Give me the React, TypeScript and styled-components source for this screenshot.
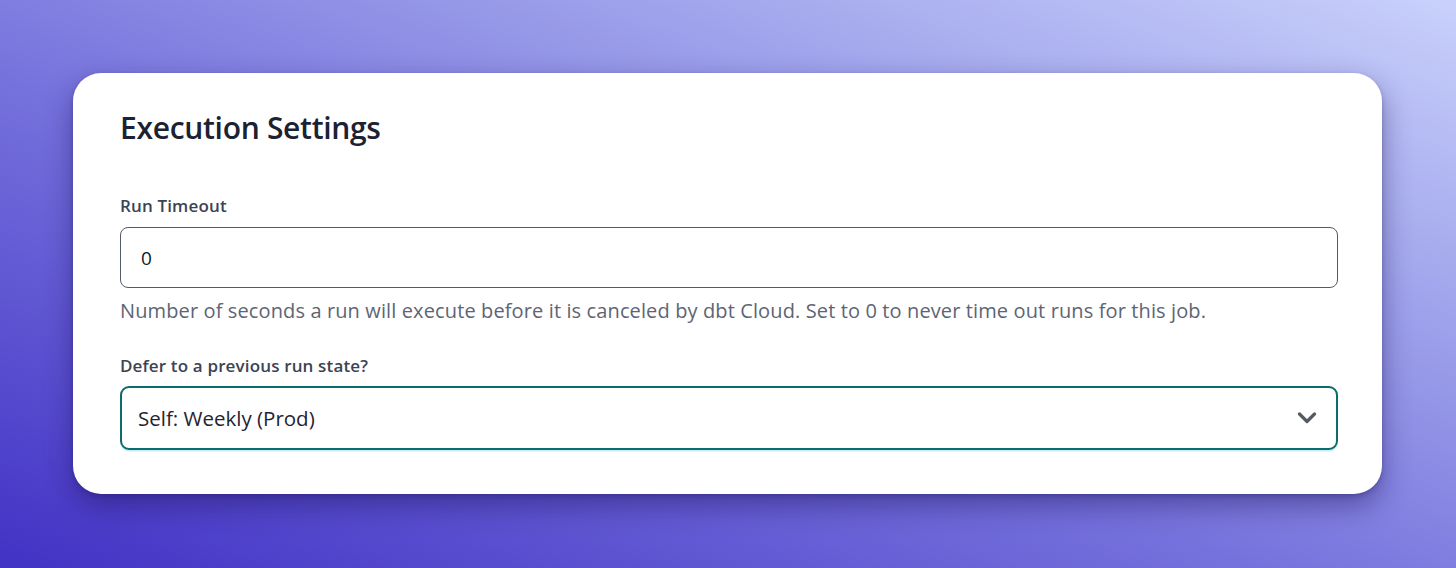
import React from "react";
import styled, { createGlobalStyle } from "styled-components";

const Global = createGlobalStyle`
  html, body { margin: 0; padding: 0; }
  body { font-family: "Open Sans", "Noto Sans", sans-serif; }
  * { box-sizing: border-box; }
`;

const Page = styled.div`
  width: 1456px;
  height: 568px;
  background: linear-gradient(to top right, #4232c5 0%, #7470dc 42%, #a2a6ec 74%, #c9d1fb 100%);
  padding: 73px 74px 0 73px;
  overflow: hidden;
`;

const Card = styled.section`
  width: 1309px;
  height: 421px;
  background: #ffffff;
  border-radius: 28px;
  box-shadow: 0 12px 28px rgba(28, 18, 90, 0.45), 0 2px 4px rgba(28, 18, 90, 0.25);
  padding: 37px 44px 0 47px;
  display: flex;
  flex-direction: column;
`;

const Title = styled.h2`
  margin: 0;
  font-size: 30px;
  line-height: 36px;
  font-weight: 600;
  color: #1a2233;
  letter-spacing: -0.3px;
`;

const Field = styled.div<{ $top: number }>`
  display: flex;
  flex-direction: column;
  margin-top: ${(p) => p.$top}px;
`;

const Label = styled.label`
  font-size: 17px;
  line-height: 22px;
  font-weight: 600;
  color: #3c4353;
  letter-spacing: 0.15px;
`;

const InputBox = styled.div`
  margin-top: 10px;
  height: 61px;
  border: 1px solid #535a68;
  border-radius: 8px;
  display: flex;
  align-items: center;
  padding: 0 20px;
  font-size: 19px;
  color: #111827;
`;

const Help = styled.p`
  margin: 10px 0 0;
  font-size: 20px;
  line-height: 26px;
  color: #5d6575;
  letter-spacing: 0.12px;
`;

const SelectBox = styled.div`
  margin-top: 9px;
  height: 64px;
  border: 2.5px solid #0d6b6d;
  border-radius: 9px;
  box-shadow: 0 1.5px 0 #c6eef3;
  display: flex;
  align-items: center;
  justify-content: space-between;
  padding: 0 19px 0 16px;
  font-size: 20.5px;
  color: #1f2430;
`;

const Chevron = () => (
  <svg width="20" height="12" viewBox="0 0 20 12" fill="none">
    <path d="M2.5 2 L10 9.5 L17.5 2" stroke="#555a63" strokeWidth="3.2" strokeLinecap="round" strokeLinejoin="round" />
  </svg>
);

export default function App() {
  return (
    <>
      <Global />
      <Page>
        <Card>
          <Title>Execution Settings</Title>
          <Field $top={49}>
            <Label>Run Timeout</Label>
            <InputBox>0</InputBox>
            <Help>
              Number of seconds a run will execute before it is canceled by dbt Cloud. Set to 0 to never time out runs for this job.
            </Help>
          </Field>
          <Field $top={31}>
            <Label>Defer to a previous run state?</Label>
            <SelectBox>
              <span>Self: Weekly (Prod)</span>
              <Chevron />
            </SelectBox>
          </Field>
        </Card>
      </Page>
    </>
  );
}
